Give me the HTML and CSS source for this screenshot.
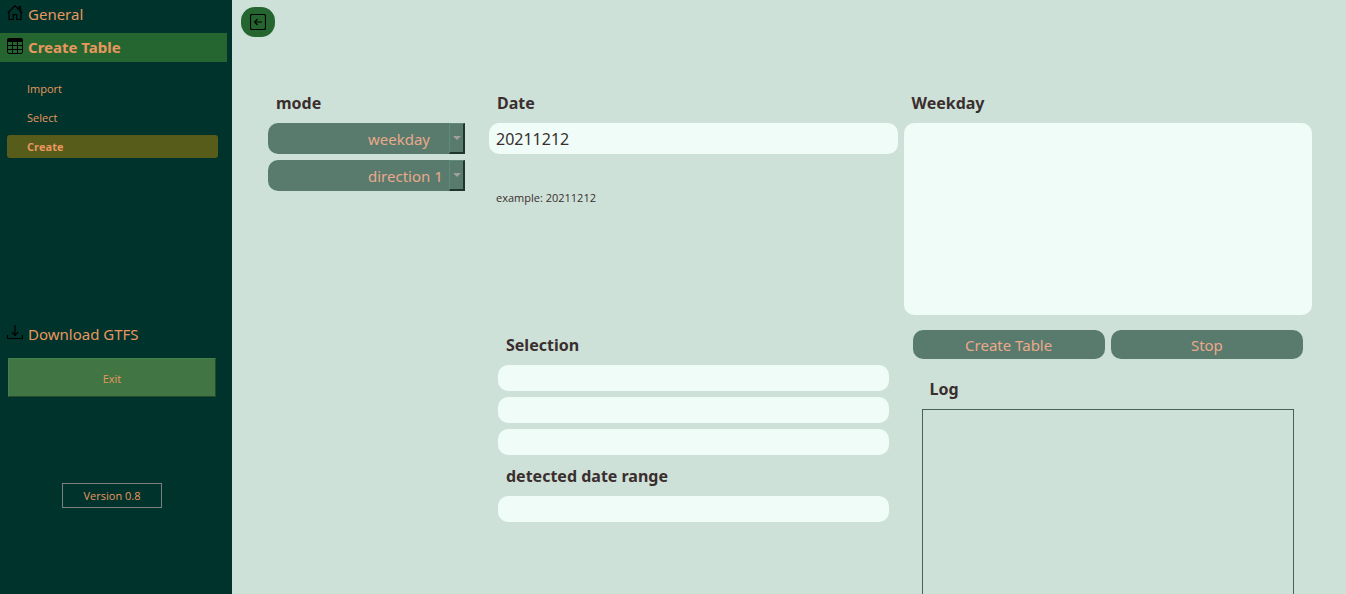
FILE: index.html
```html
<!DOCTYPE html>
<html lang="en">
<head>
<meta charset="utf-8">
<title>Create Table</title>
<link rel="stylesheet" href="styles.css">
</head>
<body>
<div class="app">
  <aside class="sidebar">
    <nav class="nav">
      <a class="nav-item" href="#general">
        <svg class="icon" viewBox="0 0 16 16" fill="none" stroke="currentColor" stroke-width="1.200"><path d="M.8 7.800 8 .8l7.200 7M2 6.800v7.700h4.300v-4.800h3.400v4.800H14V6.800M12 4.500V1.500h1.500V6"/></svg>
        General
      </a>
      <a class="nav-item nav-item-active" href="#create-table">
        <svg class="icon" viewBox="0 0 16 16" fill="none" stroke="currentColor"><path d="M2 0h12a2 2 0 0 1 2 2v2H0V2a2 2 0 0 1 2-2z" fill="currentColor" stroke="none"/><path d="M.5 3v11a1.500 1.500 0 0 0 1.500 1.500h12a1.500 1.500 0 0 0 1.500-1.500V3M.5 7.500h15M.5 11.500h15M5.500 4v11.500M10.500 4v11.500"/></svg>
        Create Table
      </a>
      <div class="subnav">
        <a class="subnav-item" href="#import">Import</a>
        <a class="subnav-item" href="#select">Select</a>
        <a class="subnav-item subnav-item-active" href="#create">Create</a>
      </div>
      <a class="nav-item" href="#download">
        <svg class="icon" viewBox="0 0 16 16" fill="none" stroke="currentColor" stroke-width="1.200"><path d="M.5 10v2.500a1 1 0 0 0 1 1h13a1 1 0 0 0 1-1V10M8 0v10.300M4.800 7.200 8 10.400l3.200-3.200"/></svg>
        Download GTFS
      </a>
    </nav>
    <button class="exit" type="button">Exit</button>
    <div class="version">Version 0.8</div>
  </aside>

  <main class="main">
    <button class="back" type="button" aria-label="Back">
      <svg class="icon" viewBox="0 0 16 16" fill="none" stroke="currentColor" stroke-width="1.200"><rect x=".5" y=".5" width="15" height="15" rx="1.500"/><path d="M12 8H4.500M7.500 5 4.500 8l3 3"/></svg>
    </button>
    <div class="columns">
      <section class="column">
        <h2 class="title"><label for="mode">mode</label></h2>
        <div class="combo">
          <select class="combo-select" id="mode"><option>weekday</option><option>date</option></select>
          <span class="combo-arrow"></span>
        </div>
        <div class="combo">
          <select class="combo-select" aria-label="direction"><option>direction 1</option><option>direction 2</option></select>
          <span class="combo-arrow"></span>
        </div>
      </section>

      <section class="column">
        <h2 class="title"><label for="date">Date</label></h2>
        <input class="field field-date" id="date" type="text" value="20211212">
        <p class="hint">example: 20211212</p>
        <div class="selection">
          <h2 class="title"><label for="selection">Selection</label></h2>
          <input class="field" id="selection" type="text">
          <input class="field" type="text" aria-label="Selection 2">
          <input class="field" type="text" aria-label="Selection 3">
          <h2 class="title title-range"><label for="range">detected date range</label></h2>
          <input class="field" id="range" type="text">
        </div>
      </section>

      <section class="column">
        <h2 class="title"><label for="weekday">Weekday</label></h2>
        <textarea class="field days" id="weekday"></textarea>
        <div class="actions">
          <button class="action" type="button">Create Table</button>
          <button class="action" type="button">Stop</button>
        </div>
        <div class="log">
          <h2 class="title"><label for="log">Log</label></h2>
          <textarea class="log-box" id="log" readonly></textarea>
        </div>
      </section>
    </div>
  </main>
</div>
</body>
</html>
```
FILE: styles.css
```css
* { box-sizing: border-box; }

body {
  margin: 0;
  font-family: "Noto Sans", "Open Sans", sans-serif;
  font-size: 16px;
  line-height: 20px;
  color: #3a2e2e;
}

button, input, select, textarea { font: inherit; color: inherit; margin: 0; }

.app {
  display: grid;
  grid-template-columns: 232px 1fr;
  height: 100vh;
  overflow: hidden;
  background: #cee1d8;
}

.sidebar {
  display: flex;
  flex-direction: column;
  background: #00332c;
  color: #e9975f;
}

.nav { display: flex; flex-direction: column; }

.nav-item {
  display: flex;
  align-items: center;
  gap: 5px;
  height: 27px;
  margin-right: 5px;
  padding-left: 7px;
  font-size: 15px;
  color: inherit;
  text-decoration: none;
}

.nav-item-active {
  height: 29px;
  margin-top: 6px;
  padding-bottom: 1px;
  background: #256630;
  font-weight: bold;
}

.icon { flex: none; width: 16px; height: 16px; color: #000; }
.nav-item .icon { margin-bottom: 2px; }

.subnav {
  display: flex;
  flex-direction: column;
  gap: 6px;
  height: 258px;
  padding: 15px 14px 0 7px;
}

.subnav-item {
  padding: 1px 0 0 20px;
  border-radius: 3px;
  font-family: "Open Sans", "Noto Sans", sans-serif;
  font-size: 11px;
  line-height: 22px;
  color: inherit;
  text-decoration: none;
}

.subnav-item-active { background: #585c1b; font-weight: bold; }

.exit {
  height: 39px;
  margin: 11px 16px 0 8px;
  padding: 2px 0 0;
  border: 1px solid;
  border-color: #418249 #254b2a #254b2a #418249;
  background: #417644;
  font-family: "Open Sans", "Noto Sans", sans-serif;
  font-size: 11px;
}

.version {
  width: 100px;
  margin: 86px 0 0 62px;
  border: 1px solid #7c8282;
  font-family: "Open Sans", "Noto Sans", sans-serif;
  font-size: 11px;
  line-height: 23px;
  text-align: center;
}

.main { padding: 7px 34px 0 9px; }

.back {
  display: grid;
  place-items: center;
  width: 34px;
  height: 30px;
  padding: 0;
  border: 0;
  border-radius: 14px;
  background: #256630;
}

.columns {
  display: grid;
  grid-template-columns: 197px 1fr 1fr;
  column-gap: 6px;
  margin: 56px 0 0 27px;
}

.column { display: flex; flex-direction: column; gap: 6px; }
.column:first-child { margin-right: -18px; padding-right: 18px; }
.column:nth-child(2) { margin-left: 18px; margin-right: -9px; }
.column:nth-child(3) { margin-left: 9px; }

.title {
  margin: 0 0 4px;
  padding-left: 8px;
  font-size: 16px;
  line-height: 20px;
}

.combo { display: flex; height: 31px; }

.combo-select {
  flex: 1;
  min-width: 0;
  padding: 0 0 0 100px;
  border: 0;
  border-radius: 10px 0 0 10px;
  appearance: none;
  background: #597b6d;
  color: #eaa98b;
  font-size: 15px;
}

.combo-arrow {
  display: grid;
  place-items: center;
  width: 16px;
  border: 2px solid;
  border-color: #628b7b #20352d #20352d #628b7b;
  border-width: 1px 2px 2px 1px;
  background: #597b6d;
  pointer-events: none;
}

.combo-arrow::before {
  content: "";
  border: 4px solid transparent;
  border-top-color: #a0a0a0;
  border-bottom: 0;
}

.field {
  width: 100%;
  height: 26px;
  padding: 0 7px;
  border: 0;
  border-radius: 10px;
  background: #effcf8;
}

.field-date { height: 31px; }

.hint {
  margin: 28px 0 0 7px;
  font-family: "Open Sans", "Noto Sans", sans-serif;
  font-size: 11px;
  line-height: 20px;
}

.selection {
  display: flex;
  flex-direction: column;
  gap: 6px;
  margin: 121px 9px 0;
}

.title-range { margin-top: 5px; }

.days { display: block; height: 192px; padding: 7px; resize: none; }

.actions {
  display: grid;
  grid-template-columns: 1fr 1fr;
  gap: 6px;
  margin: 9px 9px 0;
}

.action {
  height: 29px;
  padding: 0;
  border: 0;
  border-radius: 10px;
  background: #597b6d;
  color: #eaa98b;
  font-size: 15px;
}

.log {
  display: flex;
  flex-direction: column;
  gap: 6px;
  margin: 14px 18px 0;
}

.log-box {
  height: 240px;
  border: 1px solid #48615a;
  background: transparent;
  resize: none;
}
```
